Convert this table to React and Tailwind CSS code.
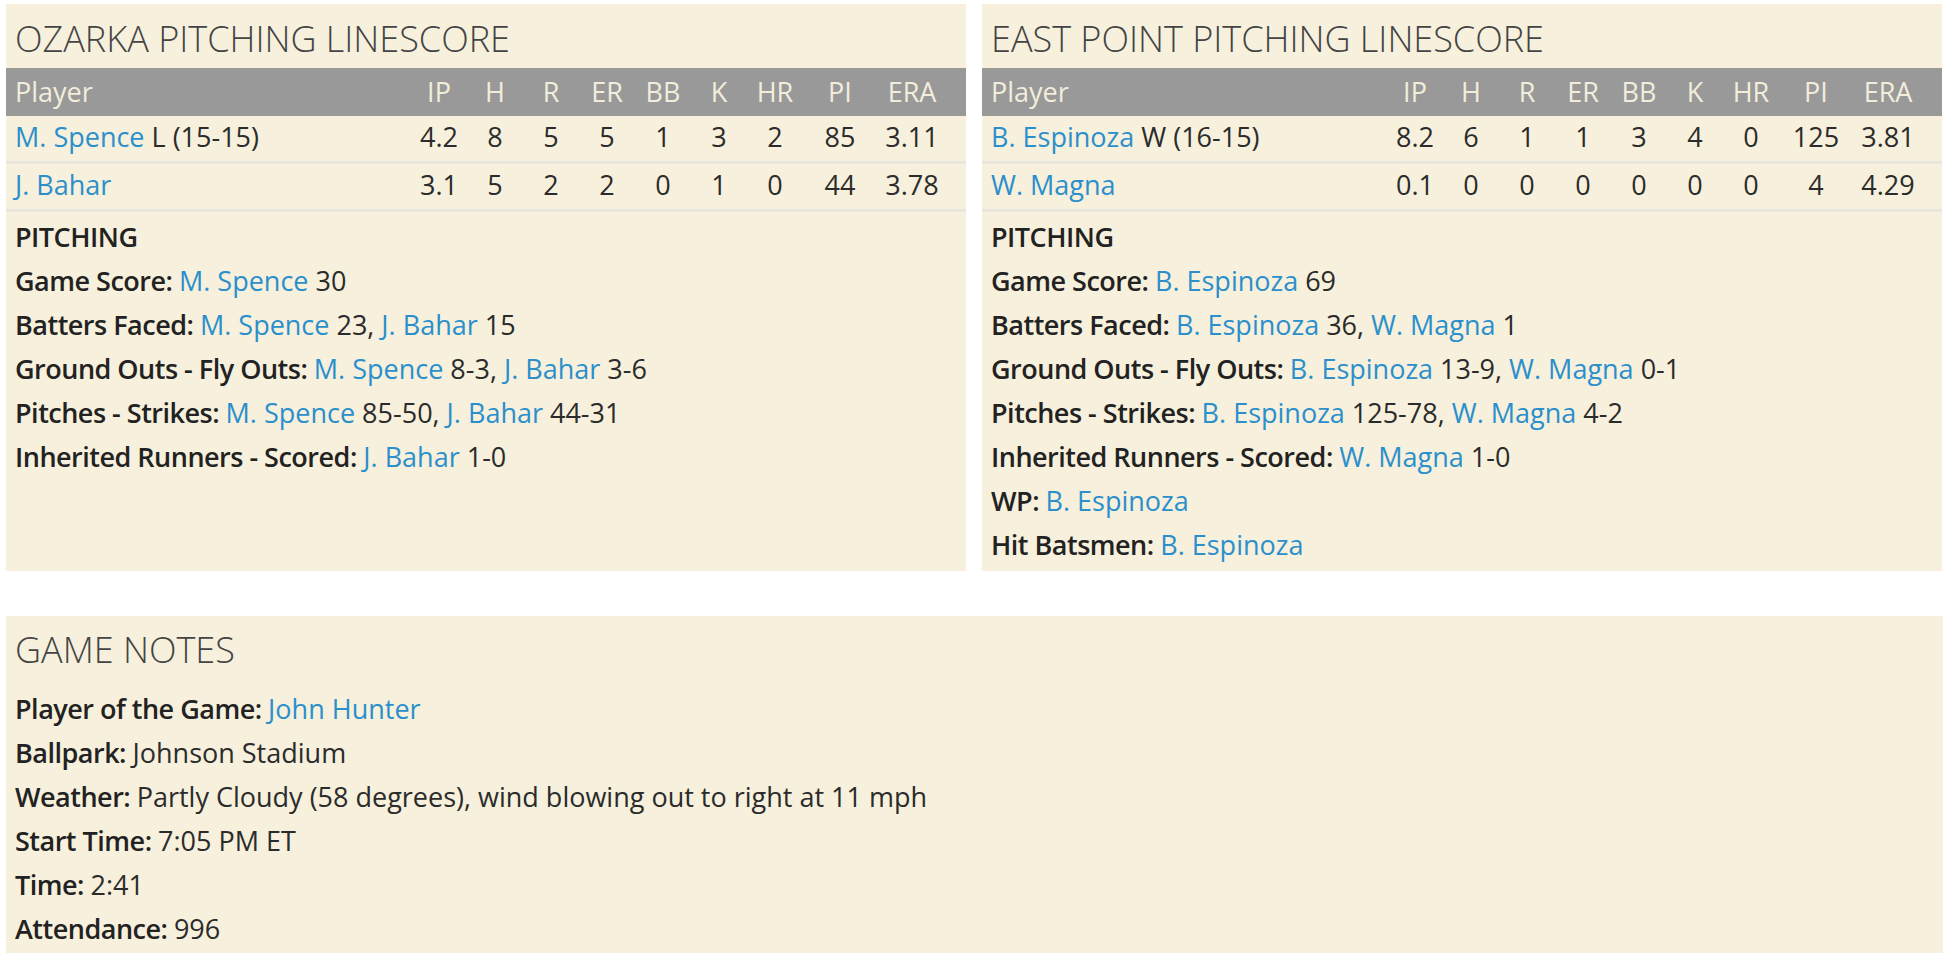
import React from "react";

const cols = ["IP", "H", "R", "ER", "BB", "K", "HR", "PI", "ERA"];
const widths = ["w-[56px]", "w-[56px]", "w-[56px]", "w-[56px]", "w-[56px]", "w-[56px]", "w-[56px]", "w-[74px]", "w-[70px]"];

const teams = [
  {
    title: "OZARKA PITCHING LINESCORE",
    rows: [
      { name: "M. Spence", note: "L (15-15)", stats: ["4.2", "8", "5", "5", "1", "3", "2", "85", "3.11"] },
      { name: "J. Bahar", note: "", stats: ["3.1", "5", "2", "2", "0", "1", "0", "44", "3.78"] },
    ],
    notes: [
      ["Game Score", [["M. Spence", " 30"]]],
      ["Batters Faced", [["M. Spence", " 23, "], ["J. Bahar", " 15"]]],
      ["Ground Outs - Fly Outs", [["M. Spence", " 8-3, "], ["J. Bahar", " 3-6"]]],
      ["Pitches - Strikes", [["M. Spence", " 85-50, "], ["J. Bahar", " 44-31"]]],
      ["Inherited Runners - Scored", [["J. Bahar", " 1-0"]]],
    ],
  },
  {
    title: "EAST POINT PITCHING LINESCORE",
    rows: [
      { name: "B. Espinoza", note: "W (16-15)", stats: ["8.2", "6", "1", "1", "3", "4", "0", "125", "3.81"] },
      { name: "W. Magna", note: "", stats: ["0.1", "0", "0", "0", "0", "0", "0", "4", "4.29"] },
    ],
    notes: [
      ["Game Score", [["B. Espinoza", " 69"]]],
      ["Batters Faced", [["B. Espinoza", " 36, "], ["W. Magna", " 1"]]],
      ["Ground Outs - Fly Outs", [["B. Espinoza", " 13-9, "], ["W. Magna", " 0-1"]]],
      ["Pitches - Strikes", [["B. Espinoza", " 125-78, "], ["W. Magna", " 4-2"]]],
      ["Inherited Runners - Scored", [["W. Magna", " 1-0"]]],
      ["WP", [["B. Espinoza", ""]]],
      ["Hit Batsmen", [["B. Espinoza", ""]]],
    ],
  },
];

const labelCls = "font-semibold tracking-[-0.5px] text-[#222]";

function Link({ children }) {
  return <a className="text-[#2b8fcc] cursor-pointer">{children}</a>;
}

function NoteLine({ label, parts }) {
  return (
    <div className="leading-[44px] whitespace-nowrap">
      <span className={labelCls}>{label}: </span>
      {parts.map(([name, rest], i) => (
        <span key={i}>
          <Link>{name}</Link>
          {rest}
        </span>
      ))}
    </div>
  );
}

function LinescorePanel({ team }) {
  return (
    <div className="w-[960px] bg-[#f6f0dc] pb-[4px]">
      <h2 className="px-[9px] pt-[17px] mb-[11px] text-[36px] font-light leading-[36px] text-[#444]">{team.title}</h2>
      <div className="flex h-[48px] items-center bg-[#999999] pr-[19px] leading-[48px] text-[#f3eddb]">
        <div className="flex-1 pl-[9px]">Player</div>
        {cols.map((c, i) => (
          <div key={c} className={`${widths[i]} text-center`}>{c}</div>
        ))}
      </div>
      {team.rows.map((r) => (
        <div key={r.name} className="flex h-[48px] border-b-[3px] border-[#e9e6de] pr-[19px] leading-[42px]">
          <div className="flex-1 pl-[9px] whitespace-nowrap">
            <Link>{r.name}</Link>
            {r.note && <span> {r.note}</span>}
          </div>
          {r.stats.map((s, i) => (
            <div key={i} className={`${widths[i]} text-center`}>{s}</div>
          ))}
        </div>
      ))}
      <div className="mt-[3px] px-[9px]">
        <div className={`${labelCls} leading-[44px]`}>PITCHING</div>
        {team.notes.map(([label, parts]) => (
          <NoteLine key={label} label={label} parts={parts} />
        ))}
      </div>
    </div>
  );
}

export default function App() {
  return (
    <div className="min-h-screen bg-white pl-[6px] pt-[4px] font-['Open_Sans',sans-serif] text-[27px] text-[#2b2b2b]">
      <div className="flex w-[1936px] gap-[16px]">
        {teams.map((t) => (
          <LinescorePanel key={t.title} team={t} />
        ))}
      </div>
      <div className="mt-[45px] w-[1937px] bg-[#f6f0dc] px-[9px] pb-[2px]">
        <h2 className="pt-[16px] mb-[19px] text-[36px] font-light leading-[36px] text-[#444]">GAME NOTES</h2>
        <div className="leading-[44px] whitespace-nowrap">
          <span className={labelCls}>Player of the Game: </span>
          <Link>John Hunter</Link>
        </div>
        <div className="leading-[44px]"><span className={labelCls}>Ballpark: </span>Johnson Stadium</div>
        <div className="leading-[44px]"><span className={labelCls}>Weather: </span>Partly Cloudy (58 degrees), wind blowing out to right at 11 mph</div>
        <div className="leading-[44px]"><span className={labelCls}>Start Time: </span>7:05 PM ET</div>
        <div className="leading-[44px]"><span className={labelCls}>Time: </span>2:41</div>
        <div className="leading-[44px]"><span className={labelCls}>Attendance: </span>996</div>
      </div>
    </div>
  );
}
